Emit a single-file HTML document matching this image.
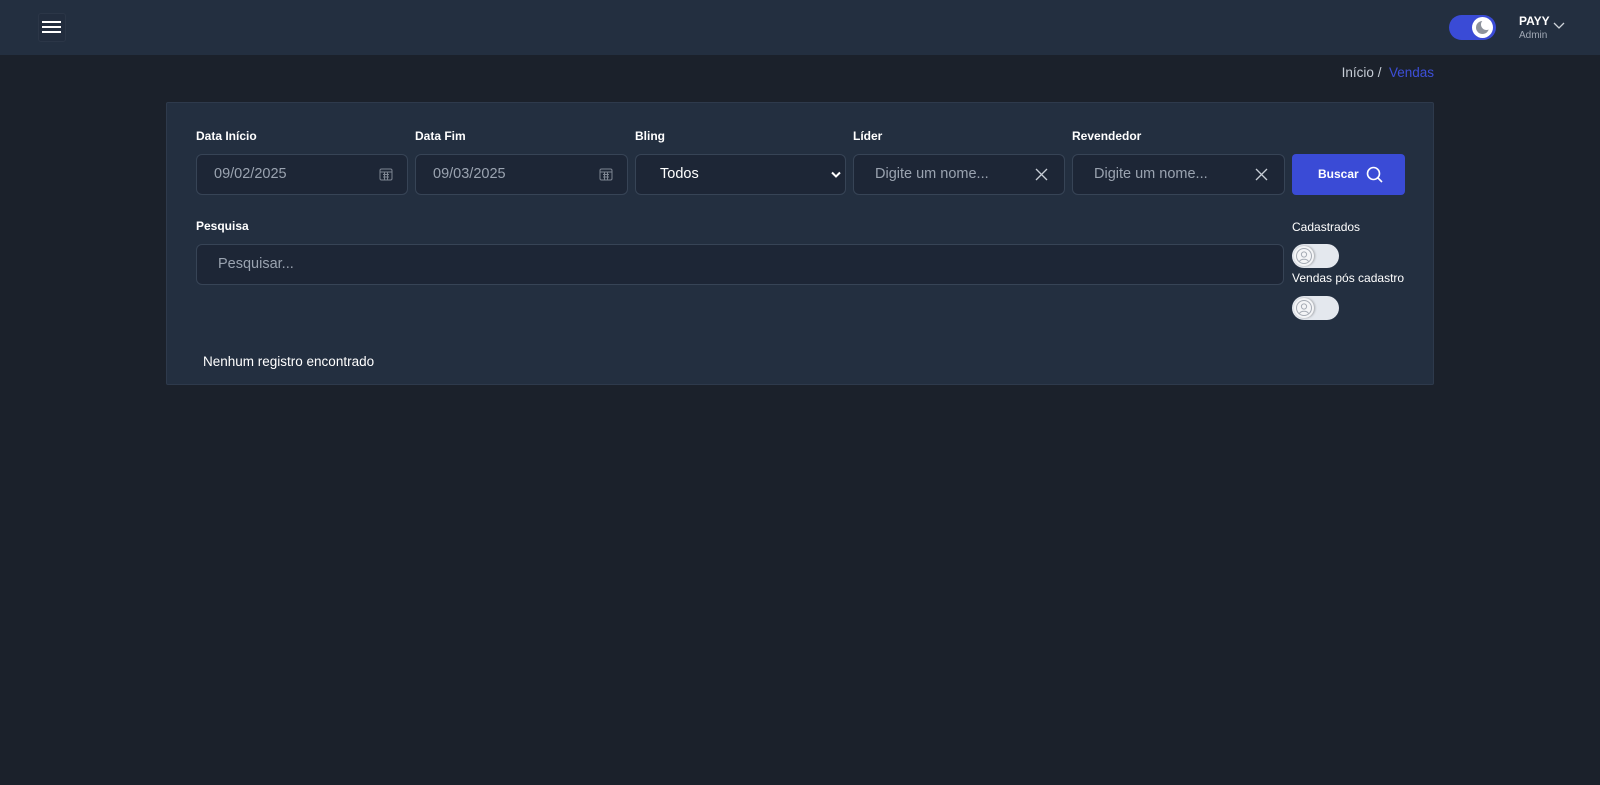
<!DOCTYPE html>
<html><head><meta charset="utf-8"><style>
*{box-sizing:border-box;margin:0;padding:0}
body{width:1600px;height:785px;background:#1b212b;font-family:"Liberation Sans",sans-serif;color:#fff;position:relative;overflow:hidden}
.hdr{position:absolute;left:0;top:0;width:1600px;height:55px;background:#232f40}
.abs{position:absolute}
.card{position:absolute;left:166px;top:102px;width:1268px;height:283px;background:#232f40;border:1px solid #2e3a4c;border-radius:2px}
.lbl{position:absolute;font-size:12px;font-weight:bold;color:#fff}
.inp{position:absolute;height:41px;background:#1d2636;border:1px solid #374456;border-radius:6px;font-size:14.5px;color:#9aa3b0;padding-left:17px;line-height:39px}
.ico{position:absolute;right:14px;top:12px}
.tog{position:absolute;width:47px;height:24px;border-radius:12px;background:#e4e8ee}
.tog .k{position:absolute;left:2px;top:2px;width:20px;height:20px;border-radius:50%;background:#f4f5f7;box-shadow:1px 0 2px rgba(0,0,0,.3)}
</style></head><body>
<div class="hdr"></div>
<div class="abs" style="left:38px;top:13px;width:28px;height:29px;border:1px solid #2b3647;border-radius:3px;background:#222d3e"></div>
<div class="abs" style="left:42px;top:21px;width:19px;height:2px;background:#fff;box-shadow:0 5px 0 #fff,0 10px 0 #fff"></div>
<div class="abs" style="left:1449px;top:15px;width:47px;height:25px;border-radius:13px;background:#3a4bd6"></div>
<div class="abs" style="left:1472px;top:17px;width:21px;height:21px;border-radius:50%;background:#fff"></div>
<div class="abs" style="left:1476px;top:21px;width:13px;height:13px;border-radius:50%;background:#8e939c"></div>
<div class="abs" style="left:1481px;top:19px;width:11px;height:11px;border-radius:50%;background:#fff"></div>
<div class="abs" style="left:1519px;top:14px;font-size:12px;font-weight:bold">PAYY</div>
<div class="abs" style="left:1519px;top:30px;font-size:10px;color:#a0a8b4">Admin</div>
<svg class="abs" style="left:1553px;top:22px" width="12" height="8"><path d="M1 1l5 5 5-5" stroke="#cfd4da" fill="none" stroke-width="1.3"/></svg>
<div class="abs" style="right:166px;top:65px;font-size:13.5px;color:#c7cdd6">Início / <span style="color:#3d4fd8">&nbsp;Vendas</span></div>
<div class="card"></div>
<div class="lbl" style="left:196px;top:129px">Data Início</div>
<div class="lbl" style="left:415px;top:129px">Data Fim</div>
<div class="lbl" style="left:635px;top:129px">Bling</div>
<div class="lbl" style="left:853px;top:129px">Líder</div>
<div class="lbl" style="left:1072px;top:129px">Revendedor</div>
<div class="inp" style="left:196px;top:154px;width:212px">09/02/2025<svg class="ico" width="14" height="14"><rect x="1" y="2" width="12" height="11" rx="1.5" fill="none" stroke="#7d8592"/><path d="M1 5h12M4 7.5h6M4 10h6M5.5 5v8M8.5 5v8" stroke="#7d8592"/></svg></div>
<div class="inp" style="left:415px;top:154px;width:213px">09/03/2025<svg class="ico" width="14" height="14"><rect x="1" y="2" width="12" height="11" rx="1.5" fill="none" stroke="#7d8592"/><path d="M1 5h12M4 7.5h6M4 10h6M5.5 5v8M8.5 5v8" stroke="#7d8592"/></svg></div>
<div class="inp" style="left:635px;top:154px;width:211px;color:#fff;padding-left:24px">Todos<svg class="ico" style="right:4px;top:16px" width="10" height="8"><path d="M1 1.5l4 4 4-4" stroke="#fff" fill="none" stroke-width="2"/></svg></div>
<div class="inp" style="left:853px;top:154px;width:212px;padding-left:21px">Digite um nome...<svg class="ico" style="right:16px;top:13px" width="13" height="13"><path d="M1 1l11 11M12 1L1 12" stroke="#c7cdd6" stroke-width="1.3"/></svg></div>
<div class="inp" style="left:1072px;top:154px;width:213px;padding-left:21px">Digite um nome...<svg class="ico" style="right:16px;top:13px" width="13" height="13"><path d="M1 1l11 11M12 1L1 12" stroke="#c7cdd6" stroke-width="1.3"/></svg></div>
<div class="abs" style="left:1292px;top:154px;width:113px;height:41px;background:#3a4bd6;border-radius:4px;font-size:12px;font-weight:bold;line-height:41px;padding-left:26px">Buscar<svg style="position:absolute;left:74px;top:12px" width="17" height="17"><circle cx="7.5" cy="7.5" r="6" stroke="#fff" fill="none" stroke-width="1.6"/><path d="M12 12l4 4" stroke="#fff" stroke-width="1.6"/></svg></div>
<div class="lbl" style="left:196px;top:219px">Pesquisa</div>
<div class="inp" style="left:196px;top:244px;width:1088px;padding-left:21px">Pesquisar...</div>
<div class="lbl" style="left:1292px;top:220px;font-weight:normal">Cadastrados</div>
<div class="tog" style="left:1292px;top:244px"><div class="k"><svg width="20" height="20"><circle cx="10" cy="10" r="7.5" fill="none" stroke="#a6acb5"/><circle cx="10" cy="8.5" r="2.6" fill="none" stroke="#a6acb5"/><path d="M5.5 15.5c1.5-3 7.5-3 9 0" fill="none" stroke="#a6acb5"/></svg></div></div>
<div class="lbl" style="left:1292px;top:271px;font-weight:normal">Vendas pós cadastro</div>
<div class="tog" style="left:1292px;top:296px"><div class="k"><svg width="20" height="20"><circle cx="10" cy="10" r="7.5" fill="none" stroke="#a6acb5"/><circle cx="10" cy="8.5" r="2.6" fill="none" stroke="#a6acb5"/><path d="M5.5 15.5c1.5-3 7.5-3 9 0" fill="none" stroke="#a6acb5"/></svg></div></div>
<div class="abs" style="left:203px;top:354px;font-size:13.5px">Nenhum registro encontrado</div>
</body></html>
